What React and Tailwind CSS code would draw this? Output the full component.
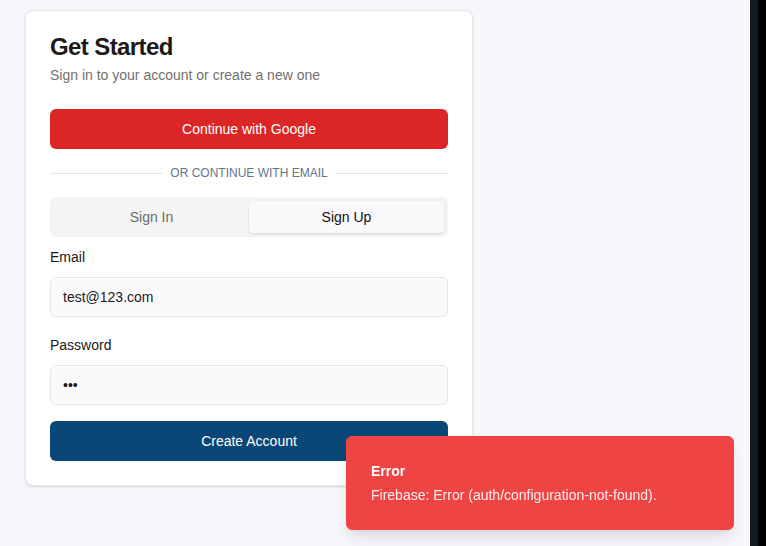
import React, { useState } from 'react'

const App = () => {
  const [tab, setTab] = useState('signup')
  const [email, setEmail] = useState('test@123.com')
  const [password, setPassword] = useState('123')

  return (
    <div className="flex min-h-screen w-full bg-[#f7f7fb] font-['Liberation_Sans',Arial,sans-serif]">
      <div className="relative flex-1 pl-[25px] pt-[10px]">
        <div className="w-[448px] rounded-lg border border-[#e6e6ea] bg-white p-6 shadow-sm">
          <h1 className="text-2xl font-bold leading-none tracking-tight text-[#1c1917]">Get Started</h1>
          <p className="mt-1.5 text-sm leading-5 text-[#736f6c]">Sign in to your account or create a new one</p>

          <button className="mt-6 h-10 w-full rounded-md bg-[#dc2626] text-sm text-white">
            Continue with Google
          </button>

          {/* divider */}
          <div className="mt-4 flex items-center">
            <div className="h-px flex-1 bg-[#e4e4e7]" />
            <span className="px-2 text-xs uppercase leading-4 text-[#64748b]">Or continue with email</span>
            <div className="h-px flex-1 bg-[#e4e4e7]" />
          </div>

          <div className="mt-4 grid h-10 grid-cols-2 rounded-md bg-[#f4f4f4] p-1">
            <button
              onClick={() => setTab('signin')}
              className={`rounded-sm text-sm ${tab === 'signin' ? 'bg-[#f9f9fc] text-[#111] shadow-sm' : 'text-[#6b6b6b]'}`}
            >
              Sign In
            </button>
            <button
              onClick={() => setTab('signup')}
              className={`rounded-sm text-sm ${tab === 'signup' ? 'bg-[#f9f9fc] text-[#111] shadow-sm' : 'text-[#6b6b6b]'}`}
            >
              Sign Up
            </button>
          </div>

          <label className="mt-[10px] block text-sm leading-5 text-[#1c1917]">Email</label>
          <input
            value={email}
            onChange={(e) => setEmail(e.target.value)}
            className="mt-[10px] block h-10 w-full rounded-md border border-[#e6e6ea] bg-[#fafafd] px-3 text-sm text-[#1c1917] outline-none"
          />

          <label className="mt-[18px] block text-sm leading-5 text-[#1c1917]">Password</label>
          <input
            type="password"
            value={password}
            onChange={(e) => setPassword(e.target.value)}
            className="mt-[10px] block h-10 w-full rounded-md border border-[#e6e6ea] bg-[#fafafd] px-3 text-sm text-[#1c1917] outline-none"
          />

          <button className="mt-4 h-10 w-full rounded-md bg-[#0a4777] text-sm text-white">
            {tab === 'signup' ? 'Create Account' : 'Sign In'}
          </button>
        </div>

        {/* toast */}
        <div className="fixed bottom-0 right-4 w-[420px] p-4">
          <div className="rounded-md border border-[#ef4444] bg-[#ef4444] p-6 text-white shadow-lg">
            <div className="grid gap-1">
              <div className="text-sm font-bold leading-5">Error</div>
              <div className="text-sm leading-5 opacity-90">Firebase: Error (auth/configuration-not-found).</div>
            </div>
          </div>
        </div>
      </div>

      <div className="w-2 bg-[#111827]" />
      <div className="w-2 bg-black" />
    </div>
  )
}

export default App
